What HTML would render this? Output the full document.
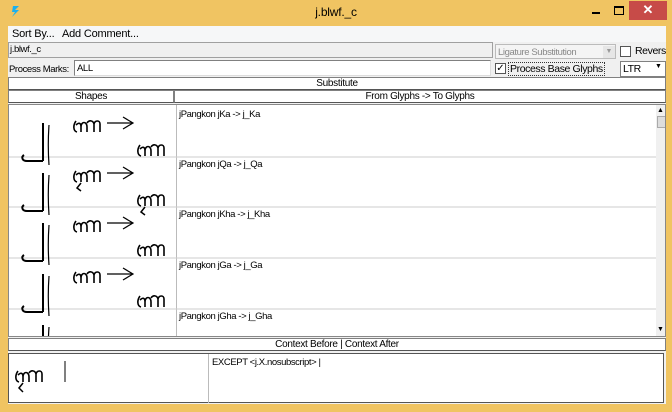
<!DOCTYPE html>
<html><head><meta charset="utf-8"><style>
*{box-sizing:border-box;margin:0;padding:0}
body{width:672px;height:412px;background:#f0c462;font-family:"Liberation Sans",sans-serif;font-size:10px;color:#000;position:relative;overflow:hidden}
.a{position:absolute}
.t{font-size:11px;letter-spacing:-0.2px}
.hd{position:absolute;background:#fff;border:1px solid #808080;border-bottom-color:#555;text-align:center;font-size:10px;line-height:11px;letter-spacing:-0.3px}
.it{font-size:9.5px;letter-spacing:-0.4px}
</style></head><body>
<svg class="a" style="left:9px;top:4px" width="14" height="14" viewBox="0 0 14 14"><path d="M4 2 L10 2 L6 6 L10 6 L3 13 L6 8 L3 8 Z" fill="#1ab0f0"/></svg>
<div class="a t" style="left:0;width:672px;top:5px;text-align:center;font-size:12px">j.blwf._c</div>
<div class="a" style="left:592px;top:12px;width:8px;height:2px;background:#000"></div>
<div class="a" style="left:614px;top:6px;width:10px;height:9px;border:1px solid #000;border-top-width:2px"></div>
<div class="a" style="left:629px;top:1px;width:38px;height:19px;background:#c74b48;color:#fff;text-align:center;font-size:13px;line-height:18px;font-weight:bold">✕</div>
<div class="a" style="left:8px;top:26px;width:658px;height:378px;background:#f0f0f0"></div>
<div class="a" style="left:8px;top:26px;width:658px;height:16px;background:#f6f7f8"></div>
<div class="a t" style="left:12px;top:28px">Sort By...</div>
<div class="a t" style="left:62px;top:28px">Add Comment...</div>
<div class="a" style="left:8px;top:42px;width:485px;height:16px;border:1px solid #a0a0a0;background:#f0f0f0"></div>
<div class="a it" style="left:10px;top:44px">j.blwf._c</div>
<div class="a it" style="left:9px;top:64px">Process Marks:</div>
<div class="a" style="left:74px;top:60px;width:417px;height:16px;border:1px solid #808080;border-right-color:#ddd;border-bottom-color:#ddd;background:#fff"></div>
<div class="a it" style="left:77px;top:63px">ALL</div>
<div class="a" style="left:495px;top:44px;width:121px;height:15px;border:1px solid #bbb;background:#f4f4f4"></div>
<div class="a it" style="left:498px;top:47px;color:#888">Ligature Substitution</div>
<div class="a" style="left:603px;top:46px;width:12px;height:12px;background:#e6e6e6;color:#999;font-size:7px;text-align:center;line-height:12px">▼</div>
<div class="a" style="left:620px;top:46px;width:11px;height:11px;border:1px solid #555;background:#fff"></div>
<div class="a it" style="left:635px;top:45px;font-size:10.5px">Revers</div>
<div class="a" style="left:495px;top:63px;width:11px;height:11px;border:1px solid #555;background:#fff;font-size:10px;line-height:9px;text-align:center">✓</div>
<div class="a it" style="left:508px;top:62px;border:1px dotted #333;padding:0 1px;font-size:10.5px;height:14px">Process Base Glyphs</div>
<div class="a" style="left:620px;top:61px;width:46px;height:16px;border:1px solid #808080;background:#fff"></div>
<div class="a it" style="left:623px;top:63px;font-size:10.5px">LTR</div>
<div class="a" style="left:655px;top:63px;font-size:7px">▼</div>
<div class="hd" style="left:8px;top:77px;width:658px;height:13px">Substitute</div>
<div class="hd" style="left:8px;top:90px;width:166px;height:13px">Shapes</div>
<div class="hd" style="left:174px;top:90px;width:492px;height:13px">From Glyphs -&gt; To Glyphs</div>
<div class="a" style="left:8px;top:104px;width:658px;height:233px;background:#fff;border:1px solid #888;overflow:hidden">
<div class="a" style="left:167px;top:0;width:1px;height:233px;background:#bbb"></div>
<div class="a" style="left:647px;top:0;width:10px;height:232px;background:#f0f0f0"></div>
<div class="a" style="left:648px;top:2px;font-size:7px">▲</div>
<div class="a" style="left:648px;top:11px;width:9px;height:12px;background:#ddd;border:1px solid #aaa"></div>
<div class="a" style="left:648px;top:221px;font-size:7px">▼</div>
<svg class="a" style="left:0;top:0" width="647" height="233">
<defs>
<g id="pk" fill="none" stroke="#000"><path d="M34 18 L34 56" stroke-width="2"/><path d="M34 56 L18 56 C13 56 12 52 15 50" stroke-width="2"/><path d="M40 20 C39 34 39 46 40 60" stroke-width="1.2"/></g>
<g id="ka" fill="none" stroke="#000" stroke-width="1.6"><path d="M3 2 C0 6 0 12 4 13 M3 6 C6 3 8 4 8 8 L8 13 M8 8 C8 2 14 2 14 8 L14 13 M14 4 C16 1 20 1 21 5 L21 13 M21 5 C22 1 27 1 27 5 L27 13"/></g>
<g id="ar" fill="none" stroke="#000" stroke-width="1.2"><path d="M0 6 L26 6 M16 0 L26 6 L16 12"/></g>
</defs>
<line x1="0" y1="52" x2="647" y2="52" stroke="#ccc"/><line x1="0" y1="102" x2="647" y2="102" stroke="#ccc"/><line x1="0" y1="153" x2="647" y2="153" stroke="#ccc"/><line x1="0" y1="204" x2="647" y2="204" stroke="#ccc"/>
<g><use href="#pk"/><use href="#ka" x="64" y="14"/><use href="#ar" x="98" y="12"/><use href="#ka" x="128" y="38"/></g>
<g transform="translate(0,50)"><use href="#pk"/><use href="#ka" x="64" y="14"/><path d="M72 28 L68 33 L72 36" fill="none" stroke="#000" stroke-width="1.5"/><use href="#ar" x="98" y="12"/><use href="#ka" x="128" y="38"/><path d="M136 52 L132 57 L136 60" fill="none" stroke="#000" stroke-width="1.5"/></g>
<g transform="translate(0,100)"><use href="#pk"/><use href="#ka" x="64" y="14"/><use href="#ar" x="98" y="12"/><use href="#ka" x="128" y="38"/></g>
<g transform="translate(0,151)"><use href="#pk"/><use href="#ka" x="64" y="14"/><use href="#ar" x="98" y="12"/><use href="#ka" x="128" y="38"/></g>
<g transform="translate(0,202)"><use href="#pk"/></g>
</svg>
<div class="a it" style="left:170px;top:4px">jPangkon jKa -&gt; j_Ka</div>
<div class="a it" style="left:170px;top:54px">jPangkon jQa -&gt; j_Qa</div>
<div class="a it" style="left:170px;top:104px">jPangkon jKha -&gt; j_Kha</div>
<div class="a it" style="left:170px;top:155px">jPangkon jGa -&gt; j_Ga</div>
<div class="a it" style="left:170px;top:206px">jPangkon jGha -&gt; j_Gha</div>
</div>
<div class="hd" style="left:8px;top:338px;width:658px;height:13px">Context Before | Context After</div>
<div class="a" style="left:8px;top:353px;width:656px;height:50px;background:#fff;border:1px solid #555">
<div class="a" style="left:199px;top:0;width:1px;height:49px;background:#bbb"></div>
<svg class="a" style="left:0;top:0" width="200" height="50"><use href="#ka" x="6" y="15"/><path d="M14 29 L10 34 L14 38" fill="none" stroke="#000" stroke-width="1.5"/><line x1="56" y1="7" x2="56" y2="28" stroke="#000" stroke-width="1"/></svg>
<div class="a it" style="left:203px;top:3px">EXCEPT &lt;j.X.nosubscript&gt; |</div>
</div>
</body></html>
